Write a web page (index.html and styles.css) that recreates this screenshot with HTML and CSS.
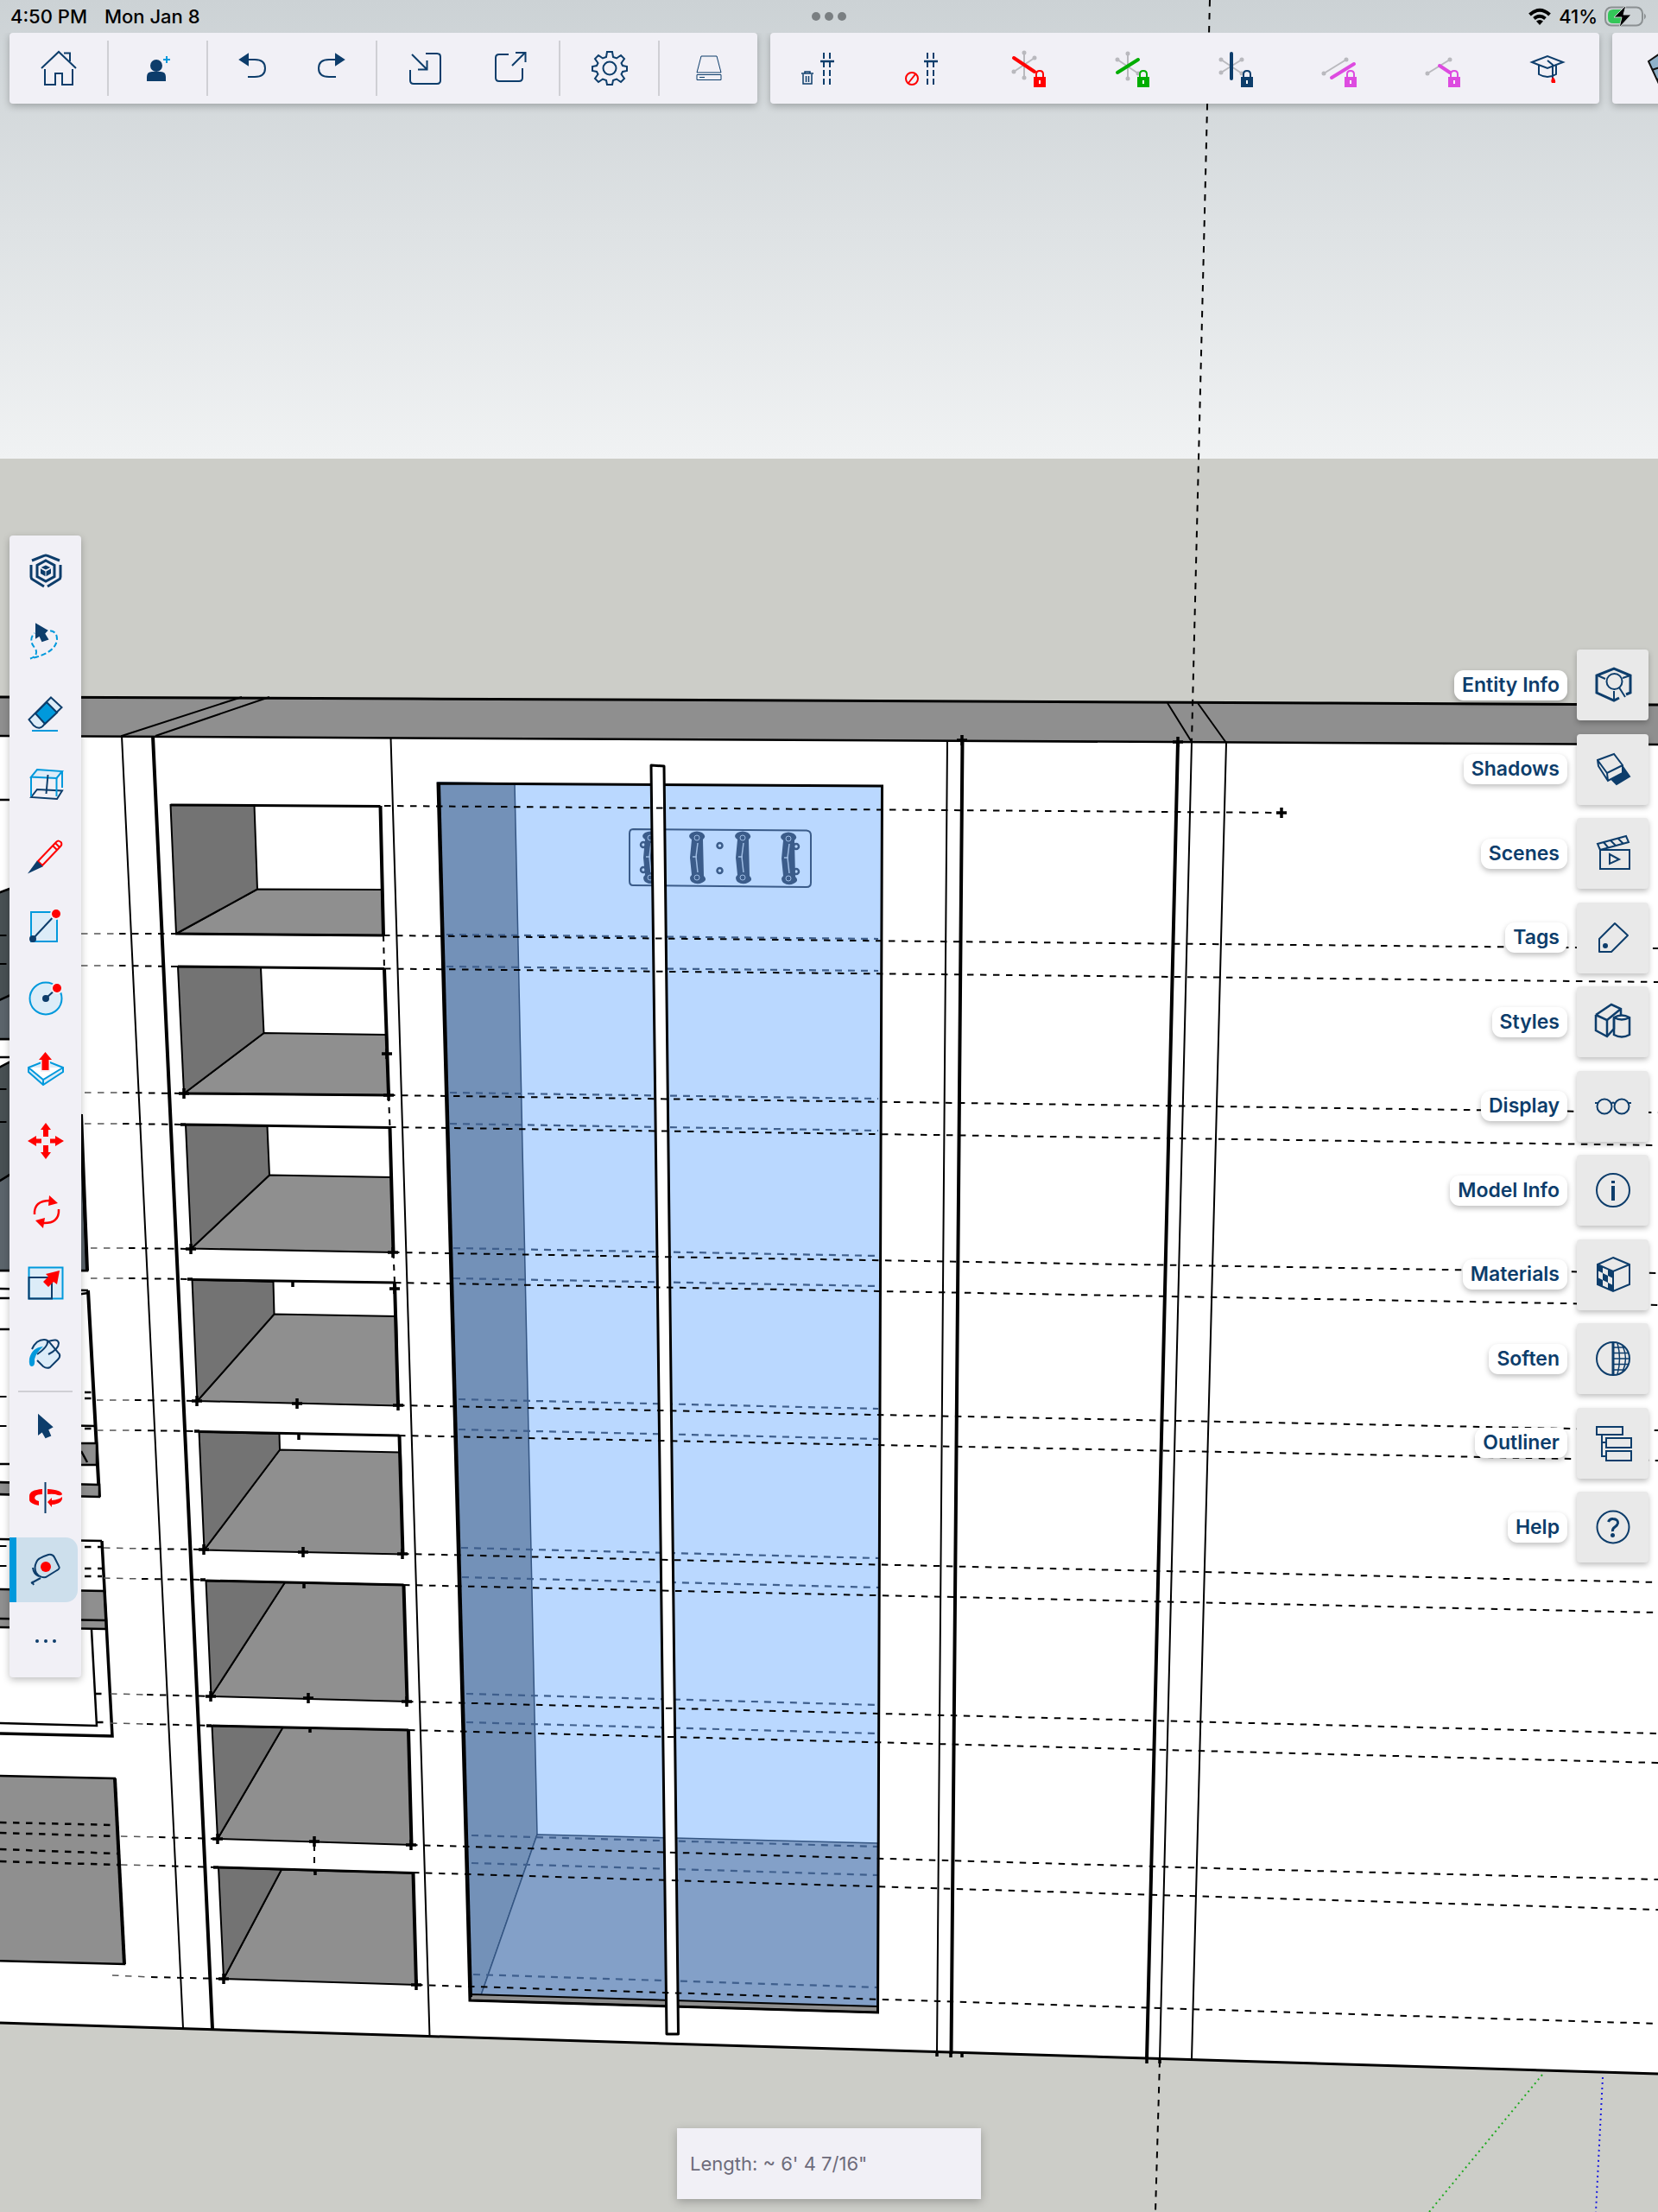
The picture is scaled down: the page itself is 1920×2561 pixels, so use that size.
FILE: index.html
```html
<!DOCTYPE html>
<html lang="en">
<head>
<meta charset="utf-8">
<meta name="viewport" content="width=device-width, initial-scale=1">
<title>Cabinet model</title>
<link rel="stylesheet" href="styles.css">
</head>
<body>
<div class="app">
  <svg class="scene" viewBox="0 0 1920 2561" preserveAspectRatio="xMidYMin slice" role="img" aria-label="3D model of a cabinet wall">
    <defs>
      <linearGradient id="sky" x1="0" y1="0" x2="0" y2="1"><stop offset="0" stop-color="#ccd2d5"/><stop offset="1" stop-color="#f0f2f3"/></linearGradient>
      <path id="plus" d="M-6 0H6M0-6V6" stroke="#000" stroke-width="3.5"/>
      <g id="hook"><path d="M-6-20q-6-4 0-8q6-3 12 0q6 4 1 8l1 42q5 5-2 8q-6 3-12-1q-4-5 0-8l-2-20z" fill="#3b5c8a" stroke="none"/><circle cx="0" cy="-22" r="3" stroke="#9fbde4" stroke-width="1"/><circle cx="0" cy="24" r="3" stroke="#9fbde4" stroke-width="1"/><path d="M1-16L-1 0L1 18M-5 0h5" stroke="#9fbde4" stroke-width="1.5"/></g>
    </defs>
    <rect width="1920" height="2561" fill="#cccdc8"/>
    <rect width="1920" height="531" fill="url(#sky)"/>

    <!-- Carcass -->
    <path d="M0 852L1920 862V2401L0 2342Z" fill="#fff"/>
    <path d="M0 807L1920 816V862L0 852Z" fill="#8f8f8f"/>
    <g fill="none" stroke="#000" stroke-width="3">
      <path d="M0 807L480 809L1540 814L1920 816"/>
      <path d="M0 852L1920 862" stroke-width="2.5"/>
      <path d="M0 2342L480 2357L1100 2376L1920 2401"/>
    </g>
    <g fill="none" stroke="#000" stroke-width="2">
      <path d="M280 807L141 852L212 2348M312 807L180 852M452.500 854L497.500 2357M1097 857L1085 2376M1352 814L1380 859L1343 2384M1387 814L1420 860L1380 2384"/>
      <path d="M177 852L246 2349M1114.500 857L1101.500 2378M1364 859L1328 2384" stroke-width="4"/>
    </g>

    <!-- Drawers and cabinets cut off on the left -->
    <g stroke="#000" stroke-width="2.500">
      <path d="M0 926H11M0 1224H11M0 1492L102 1494M0 1503H60L102 1497M0 1539H20" fill="none"/>
      <path d="M-5 1035L11 1029L60 1003V1203H-5Z" fill="#485053"/>
      <path d="M-5 1160L60 1130V1203H-5Z" fill="#5b646b"/>
      <path d="M-5 1238L60 1204L93 1290L101 1471H-5Z" fill="#485053"/>
      <path d="M-5 1370L93 1310L101 1471H-5Z" fill="#5b646b"/>
      <path d="M94 1290L101 1471M102 1494L115 1733" stroke-width="4" fill="none"/>
      <path d="M60 1671H112V1696H60ZM60 1650L111 1651" fill="#8f8f8f"/>
      <path d="M94 1680L101 1693M0 1695H60" fill="none"/>
      <path d="M-5 1716L115 1719V1733L-5 1730Z" fill="#8f8f8f"/>
      <path d="M-5 1840L121 1842L123 1876L-5 1874ZM-5 1874L123 1876V1886L-5 1884Z" fill="#8f8f8f"/>
      <path d="M0 1995L112 1998L106 1887M0 1782L118 1784" fill="none"/>
      <path d="M118 1784L130 2010L0 2007" fill="none" stroke-width="3.500"/>
      <path d="M-5 2056L133 2059L144 2274L-5 2270Z" fill="#8f8f8f"/>
      <path d="M133 2059L144 2274" stroke-width="4"/>
    </g>

    <!-- Open niches -->
    <g fill="#8f8f8f" stroke="#000" stroke-width="2">
      <path d="M204 1081L298 1029.500L442 1030L444 1083Z"/><path d="M213 1266L305.500 1196L448 1198L450 1268Z"/>
      <path d="M221.500 1445.500L312 1360.500L453 1363L455.500 1450Z"/><path d="M228.500 1622L317.500 1521.500L459 1524L461 1627.500Z"/>
      <path d="M236.500 1794.500L324 1678.500L464 1681.500L466.500 1799.500Z"/><path d="M244.500 1964L330 1832L467.500 1835L471.500 1970Z"/>
      <path d="M252 2129L327.500 2000L473 2003L476.500 2136Z"/><path d="M259 2291L326 2164.500L478.500 2168.500L482 2298Z"/>
    </g>
    <g fill="#737373" stroke="#000" stroke-width="2">
      <path d="M197.500 932L294.500 932L298 1029.500L204 1081Z"/><path d="M206 1119L302 1120L305.500 1196L213 1266Z"/>
      <path d="M215 1302L309.500 1304L312 1360.500L221.500 1445.500Z"/><path d="M222.500 1481.500L316.500 1484L317.500 1521.500L228.500 1622Z"/>
      <path d="M230.500 1657.500L323.500 1660L324 1678.500L236.500 1794.500Z"/><path d="M238.500 1830L330 1832L244.500 1964Z"/>
      <path d="M245.500 1998L327.500 2000L252 2129Z"/><path d="M253 2162L326 2164.500L259 2291Z"/>
    </g>
    <g fill="none" stroke="#000" stroke-width="3">
      <path d="M197.500 932L440.500 933.500M204 1081L444 1083M206 1119L445 1121.500M213 1266L450 1268M215 1302L451.500 1305.500M222.500 1481.500L457 1485M230.500 1657.500L462.500 1662M238.500 1830L467.500 1835M245.500 1998L473 2003M253 2162L478.500 2168.500"/>
      <path stroke-width="4" d="M440.500 933L444 1083M445 1121.500L450 1268M451.500 1305.500L455.500 1450M457 1485L461 1627.500M462.500 1662L466.500 1799.500M467.500 1835L471.500 1970M473 2003L476.500 2136M478.500 2168.500L482 2298"/>
      <path stroke-width="2" stroke-dasharray="7 7" d="M444 1083L445 1121M450 1268L451.500 1305M455.500 1450L457 1485M364 2136V2168"/>
    </g>

    <!-- Tall recess -->
    <path d="M507 906L1021.500 910L1016.500 2330L544 2316Z" fill="#bad8ff"/>
    <g stroke="#355683" stroke-width="1.500">
      <path d="M507 906L596 907L622 2124L557 2310H544Z" fill="#7391b8"/>
      <path d="M622 2124L1016.500 2134V2324L557 2310Z" fill="#83a0c8"/>
    </g>
    <g fill="none" stroke="#3f5f8d" stroke-width="2.200" stroke-dasharray="8 7">
      <path d="M517 1082L1017 1087M517 1119L1017 1124M521 1265L1017 1272M521 1301L1017 1309M525 1445L1017 1454M525 1480L1017 1489M531 1620L1017 1631M531 1655L1017 1666M534 1792L1017 1804M535 1826L1017 1838M540 1961L1017 1974M540 1994L1017 2007M546 2125L1017 2138M546 2157L1017 2171M548 2286L1017 2301"/>
    </g>
    <g fill="none" stroke="#3b5c8a" stroke-width="2">
      <path d="M733 960L934 961.500Q939 962 939 967V1022Q939 1027 934 1027L733 1025Q729 1025 729 1020V965Q729 960 733 960Z"/>
      <use href="#hook" x="753" y="992"/><use href="#hook" x="807" y="992"/><use href="#hook" x="860" y="992"/><use href="#hook" x="913" y="993"/>
      <g stroke-width="2.500"><circle cx="745" cy="978" r="3"/><circle cx="745" cy="1007" r="3"/><circle cx="833.500" cy="979" r="3"/><circle cx="833.500" cy="1008" r="3"/><circle cx="922" cy="980" r="3"/><circle cx="922" cy="1009" r="3"/></g>
    </g>
    <path d="M545 2309L1016.500 2323V2330L544 2316Z" fill="#8f8f8f" stroke="#000" stroke-width="2"/>
    <path d="M507 907L544 2316L1016.500 2330L1021.500 910Z" fill="none" stroke="#000" stroke-width="3"/>
    <path d="M509 907L546 2312" stroke="#000" stroke-width="2"/>
    <path d="M754 886L769 887L785.500 2355H772Z" fill="#fff" stroke="#000" stroke-width="3" stroke-linejoin="round"/>

    <!-- Construction guides -->
    <g fill="none" stroke="#000" stroke-width="2" stroke-dasharray="7.500 7.500">
      <path d="M445 933L1484 941"/>
      <path d="M138 1081L204 1081M444 1083L1080 1090L1920 1098"/><path d="M138 1118L206 1119M445 1121.500L1080 1128L1920 1137"/>
      <path d="M142 1265L213 1266M450 1268L1920 1288"/><path d="M142 1301L215 1302M451 1305L1920 1326"/>
      <path d="M149 1445L221 1446M455 1450L1920 1474"/><path d="M149 1480L222 1481M457 1485L1920 1511"/>
      <path d="M156 1621L228 1622M461 1627L1920 1656"/><path d="M156 1656L230 1657M462 1662L1920 1691"/>
      <path d="M164 1793L236 1794M466 1799L1920 1832"/><path d="M164 1828L238 1829M467 1835L1920 1867"/>
      <path d="M170 1962L244 1964M471 1970L1920 2007"/><path d="M170 1996L245 1998M473 2003L1920 2041"/>
      <path d="M184 2127L252 2129M476 2136L1440 2164L1920 2176"/><path d="M184 2160L253 2162M478 2168L1440 2197L1920 2211"/>
      <path d="M175 2289L259 2291M482 2298L1440 2328L1920 2343"/>
      <path d="M0 2110L133 2113M0 2122L135 2126M0 2141L136 2146M0 2155L137 2159M98 1612H110M98 1619H110M98 1654H110M98 1791H118M98 1816H118M98 1825H118M110 1961H118M112 1994H120" stroke-width="2.500"/>
      <path d="M0 1083H11M0 1116H11M0 1261H11M0 1299H11M0 1617H11M0 1651H11M0 1790H11M0 1813H11"/>
      <path d="M1401 0L1380 859M1343 2386L1338 2561"/>
    </g>
    <!-- Far ends of the guides fade with depth -->
    <path fill="none" stroke="#555" stroke-width="1.500" stroke-dasharray="7.500 7.500" d="M94 1081H138M94 1118H138M98 1265H142M98 1301H142M105 1445H149M105 1480H149M112 1621H156M112 1656H156M120 1792L164 1793M120 1827L164 1828M128 1961L170 1962M128 1995L170 1996M140 2126L184 2127M140 2159L184 2160M130 2287L175 2289"/>
    <path d="M1786 2402L1655 2561" stroke="#1faa1f" stroke-width="2" stroke-dasharray="2 4"/>
    <path d="M1856 2405L1848 2561" stroke="#1c1ce0" stroke-width="2" stroke-dasharray="2 4"/>
    <use href="#plus" x="1484" y="941"/><use href="#plus" x="1114" y="857"/><use href="#plus" x="1364" y="859"/>
    <use href="#plus" x="213" y="1266"/><use href="#plus" x="450" y="1268"/><use href="#plus" x="448" y="1220"/>
    <use href="#plus" x="221" y="1446"/><use href="#plus" x="455" y="1450"/><use href="#plus" x="457" y="1492"/>
    <use href="#plus" x="228" y="1622"/><use href="#plus" x="344" y="1625"/><use href="#plus" x="461" y="1627"/>
    <use href="#plus" x="236" y="1794"/><use href="#plus" x="351" y="1797"/><use href="#plus" x="466" y="1799"/>
    <use href="#plus" x="244" y="1964"/><use href="#plus" x="357" y="1966"/><use href="#plus" x="471" y="1970"/>
    <use href="#plus" x="252" y="2129"/><use href="#plus" x="364" y="2132"/><use href="#plus" x="476" y="2136"/>
    <use href="#plus" x="259" y="2291"/><use href="#plus" x="482" y="2298"/>
    <path d="M339 1483V1490M346 1660V1667M352 1833V1839M359 2001V2006M365 2166V2171M1085 2374V2381M1101 2375V2382M1114 2376V2382M1328 2382V2389M1343 2383V2389M209 1302H215M217 1481H223M225 1657H231M232 1829H238M239 1998H245M247 2162H253" stroke="#000" stroke-width="3.500"/>
  </svg>

  <div class="top">
    <header class="status">
      <div class="status-side"><time>4:50 PM</time><span>Mon Jan 8</span></div>
      <svg class="dots" viewBox="0 0 42 12" fill="#7a7f82"><circle cx="6" cy="6" r="5"/><circle cx="21" cy="6" r="5"/><circle cx="36" cy="6" r="5"/></svg>
      <div class="status-side status-end">
        <svg class="wifi" viewBox="0 0 28 20" fill="none" stroke="#000" stroke-width="4"><path d="M2.500 8Q14-2.500 25.500 8M7.500 12.500Q14 7 20.500 12.500"/><path d="M14 20L10 15.500Q14 12.500 18 15.500Z" fill="#000" stroke="none"/></svg>
        <span>41%</span>
        <svg class="battery" viewBox="0 0 50 24"><rect x="1" y="1.500" width="43" height="21" rx="7" fill="none" stroke="#8b9092" stroke-width="2"/><path d="M10 4H20V20H10Q4 20 4 14V10Q4 4 10 4Z" fill="#34c759"/><path d="M46 8.500Q50 12 46 15.500Z" fill="#8b9092"/><path d="M25-1L11 13H20L17 25L31 10H22Z" fill="#000" stroke="#cfd4d6" stroke-width="1"/></svg>
      </div>
    </header>
    <div class="toolbars">
      <nav class="toolbar" aria-label="File">
        <div class="group"><button class="tool" aria-label="Home"><svg class="icon" viewBox="0 0 48 48"><path d="M4 24L24 5L44 24M30 6.500H37V16M8 25V43H20V30H28V43H40V25"/></svg></button></div>
        <div class="group"><button class="tool" aria-label="Add collaborator"><svg class="icon" viewBox="0 0 48 48"><g class="navy"><circle cx="22" cy="21" r="6"/><path d="M12 38V34Q12 29 17 29H27Q32 29 32 34V38Z"/></g><path class="blue" d="M34 10V18M30 14H38"/></svg></button></div>
        <div class="group pair"><button class="tool" aria-label="Undo"><svg class="icon" viewBox="0 0 48 48"><path d="M14 14H26Q38 14 38 24Q38 34 26 34H18"/><path class="navy" d="M9 14L18 8V20Z"/></svg></button><button class="tool" aria-label="Redo"><svg class="icon" viewBox="0 0 48 48"><path d="M34 14H22Q10 14 10 24Q10 34 22 34H30"/><path class="navy" d="M39 14L30 8V20Z"/></svg></button></div>
        <div class="group pair wide"><button class="tool" aria-label="Import"><svg class="icon" viewBox="0 0 48 48"><path d="M24 7H37Q41 7 41 11V38Q41 42 37 42H10Q6 42 6 38V26M8 8L25 25M15 25.500H25.500V15"/></svg></button><button class="tool" aria-label="Export"><svg class="icon" viewBox="0 0 48 48"><path d="M22 8H11Q7 8 7 12V35Q7 39 11 39H34Q38 39 38 35V24M26 21L41 6M30 6H41.500V17"/></svg></button></div>
        <div class="group"><button class="tool" aria-label="Settings"><svg class="icon" viewBox="0 0 48 48"><path d="M21 5H27L28 11L32 12.500L37 9L41 13L37.500 18L39 21L44 22V27L39 28L37.500 31L41 36L37 40L32 36.500L28 38L27 43H21L20 38L16 36.500L11 40L7 36L10.500 31L9 28L4 27V22L9 21L10.500 18L7 13L11 9L16 12.500L20 11Z"/><circle cx="24" cy="24" r="7.500"/></svg></button></div>
        <div class="group"><button class="tool" aria-label="Storage"><svg class="icon thin" viewBox="0 0 48 48"><path d="M15 10H33L38 29H10ZM10 31.500H38V37.500H10ZM13 34.500H19"/></svg></button></div>
      </nav>
      <nav class="toolbar locks" aria-label="Guides and axis locks">
        <button class="tool" aria-label="Delete guides"><svg class="icon" viewBox="0 0 48 48"><path d="M26 6V44M33 6V44" stroke-dasharray="7 3"/><path d="M22 16H38" stroke-width="2.500"/><path stroke-width="1.500" d="M0 30H14M4 30V28H10V30M2 31V42H12V31M5.500 33V40M8.500 33V40"/></svg></button>
        <button class="tool" aria-label="Disable guides"><svg class="icon" viewBox="0 0 48 48"><path d="M26 6V44M33 6V44" stroke-dasharray="7 3"/><path d="M22 16H38" stroke-width="2.500"/><g class="red"><circle cx="8" cy="36" r="7"/><path d="M12 31L4 41"/></g></svg></button>
        <button class="tool" aria-label="Lock red axis"><svg class="icon" viewBox="0 0 48 48"><path class="grey" d="M18 6V35M6 28L30 12"/><path class="dots-grey" d="M18 6V6M18 35V35M6 28V28M30 12V12"/><path class="axis" stroke="#f00" d="M6 12L30 28"/><g fill="#f00" stroke="#f00"><rect x="30" y="35" width="12" height="10"/><path fill="none" d="M32 35V31Q32 27 36 27Q40 27 40 31V35"/></g><path stroke="#fff" d="M36 38V42"/></svg></button>
        <button class="tool" aria-label="Lock green axis"><svg class="icon" viewBox="0 0 48 48"><path class="grey" d="M18 7V36M6 14L30 30"/><path class="dots-grey" d="M18 7V7M18 36V36M6 14V14M30 30V30"/><path class="axis" stroke="#00ad00" d="M6 29L30 14"/><g fill="#00ad00" stroke="#00ad00"><rect x="30" y="35" width="12" height="10"/><path fill="none" d="M32 35V31Q32 27 36 27Q40 27 40 31V35"/></g><path stroke="#fff" d="M36 38V42"/></svg></button>
        <button class="tool" aria-label="Lock blue axis"><svg class="icon" viewBox="0 0 48 48"><path class="grey" d="M6 14L30 30M6 29L30 14"/><path class="dots-grey" d="M6 14V14M30 30V30M6 29V29M30 14V14"/><path class="axis" d="M18 7V36"/><g fill="#0d3d6b"><rect x="30" y="35" width="12" height="10"/><path fill="none" d="M32 35V31Q32 27 36 27Q40 27 40 31V35"/></g><path stroke="#fff" d="M36 38V42"/></svg></button>
        <button class="tool" aria-label="Lock parallel"><svg class="icon" viewBox="0 0 48 48"><path class="grey" d="M5 30L31 14"/><path class="dots-grey" d="M5 30V30M31 14V14"/><path class="axis" stroke="#dd4be0" d="M14 35L40 19"/><g fill="#dd4be0" stroke="#dd4be0"><rect x="30" y="35" width="12" height="10"/><path fill="none" d="M32 35V31Q32 27 36 27Q40 27 40 31V35"/></g><path stroke="#fff" d="M36 38V42"/></svg></button>
        <button class="tool" aria-label="Lock perpendicular"><svg class="icon" viewBox="0 0 48 48"><path class="grey" d="M5 30L31 14"/><path class="dots-grey" d="M5 30V30M31 14V14"/><path class="axis" stroke="#dd4be0" d="M19 21L31 29"/><g fill="#dd4be0" stroke="#dd4be0"><rect x="30" y="35" width="12" height="10"/><path fill="none" d="M32 35V31Q32 27 36 27Q40 27 40 31V35"/></g><path stroke="#fff" d="M36 38V42"/></svg></button>
        <button class="tool" aria-label="Instructor"><svg class="icon" viewBox="0 0 48 48"><path d="M6 17L24 10L42 17L24 24ZM14 20V31Q24 37 34 31V20M24 15L30 20V36"/><path class="redfill" d="M30.500 34Q27 38 29 41H33Q34 38 30.500 34Z"/></svg></button>
      </nav>
      <nav class="toolbar clipped" aria-label="Views"><button class="tool" aria-label="Standard view"><svg class="icon" viewBox="0 0 48 48"><path d="M4 16L20 5H44V42H16Z" fill="#8fb1c9" stroke="#111"/><path d="M8 26L26 20M13 37L28 33M20 5L32 42" stroke="#111"/></svg></button></nav>
    </div>
  </div>

  <aside class="rail" aria-label="Drawing tools">
    <div class="rail-list">
      <button class="rail-tool" aria-label="SketchUp"><svg class="icon" viewBox="0 0 48 48"><g stroke-width="3"><path d="M7 17V31Q7 33 9 34L22 42M26 42L39 34Q41 33 41 31V17M8 12L22 6.500Q24 5.500 26 6.500L40 12"/><path d="M24 12L34 17.500V30.500L24 36L14 30.500V17.500Z"/></g><path class="navy" d="M21 20L24 18.500L27 20L24 21.500ZM19 23L22.500 25V28.500L19 26.500ZM29 23L25.500 25V28.500L29 26.500Z"/></svg></button>
      <button class="rail-tool" aria-label="Lasso"><svg class="icon" viewBox="0 0 48 48"><path class="blue" stroke-dasharray="6 3" d="M20 12Q37 8 37 21Q36 37 6 43.500Q16 40 12 32Q3 22 11 14"/><path class="navy" d="M13 4V19L17 16.500L20 23L26 21L22 14.500L25 11Z"/></svg></button>
      <button class="rail-tool" aria-label="Eraser"><svg class="icon" viewBox="0 0 48 48"><path fill="#dcecf8" d="M30 5.500L42.500 17L22 37Q17 44 10 38L4.500 31Z"/><path class="bluefill" d="M25 11L37 23L23 36L12 24Z"/><path class="blue" d="M8 44H38"/></svg></button>
      <button class="rail-tool" aria-label="Section plane"><svg class="icon" viewBox="0 0 48 48"><path d="M7 39L14 30L43 31.500L37 41Z"/><path class="blue pale" d="M14 7L43 9L36.500 17L7 15.500Z"/><path class="blue" d="M7 15V38M36.500 17V38M43 9V28"/><path d="M26.500 13L24.500 35"/></svg></button>
      <button class="rail-tool" aria-label="Pencil"><svg class="icon" viewBox="0 0 48 48"><path class="red" d="M15 30L36 8Q39 5 42 8.500Q43 11 41 13L20 35ZM32 12L37 17M35 9L40 14"/><path class="navy" d="M6 42L14 31L19 36Z"/></svg></button>
      <button class="rail-tool" aria-label="Rectangle"><svg class="icon" viewBox="0 0 48 48"><rect class="blue pale" x="7" y="7" width="30" height="34"/><path d="M9 38L36 9"/><circle cx="36" cy="9" r="7" fill="#f1f0f6" stroke="none"/><circle class="redfill" cx="36" cy="9" r="5"/><circle class="navy" cx="9" cy="38" r="3"/></svg></button>
      <button class="rail-tool" aria-label="Circle"><svg class="icon" viewBox="0 0 48 48"><circle class="blue pale" cx="24" cy="24" r="18.500"/><path d="M24 24L37 12"/><circle cx="37" cy="12" r="7" fill="#f1f0f6" stroke="none"/><circle class="redfill" cx="37" cy="12" r="5"/><circle class="navy" cx="24" cy="24" r="3"/></svg></button>
      <button class="rail-tool" aria-label="Push/Pull"><svg class="icon" viewBox="0 0 48 48"><path class="blue pale" d="M4 22L24 14L44 22V27L21 42L4 27Z"/><path class="blue" fill="#fff" d="M4 22L21 36L44 22M21 36V41"/><path d="M23.500 1L33 14H29V27H18V14H14Z" fill="#f1f0f6" stroke="none"/><path class="redfill" d="M23.500 4L31 13H27.500V25H19.500V13H16Z"/></svg></button>
      <button class="rail-tool" aria-label="Move"><svg class="icon" viewBox="0 0 48 48"><path class="redfill" d="M24 3L30 11H27V19H21V11H18ZM24 45L30 37H27V29H21V37H18ZM3 24L13 18V21.500H19V26.500H13V30ZM45 24L35 18V21.500H29V26.500H35V30Z"/></svg></button>
      <button class="rail-tool" aria-label="Rotate"><svg class="icon" viewBox="0 0 48 48"><path class="red" stroke-width="2.500" d="M11 27Q10 11 29 11M39 21Q40 38 20 37"/><path class="redfill" d="M28 5L38 14L27 17ZM21 43L12 34L23 31Z"/></svg></button>
      <button class="rail-tool" aria-label="Scale"><svg class="icon" viewBox="0 0 48 48"><rect class="blue pale" x="4.500" y="5.500" width="39" height="36"/><path d="M4.500 17H31V41.500H4.500Z"/><path class="redfill" d="M40 9L24 13L27 16L21 22L27 28L33 22L37 25Z"/></svg></button>
      <button class="rail-tool" aria-label="Paint bucket"><svg class="icon" viewBox="0 0 48 48"><path fill="#dcecf8" d="M8 18Q13 7 22 7Q26 7 29 11L40 24Q41 27 38 30L29 39Q25 41 21 38L14 31"/><path d="M27 9Q38 5 39 11Q39 18 27 24M26 9Q27 15 14 24"/><path class="bluefill" stroke="none" d="M21 15Q8 16 5 29Q4 38 8 38Q12 37 11 30Q12 23 21 15Z"/></svg></button>
    </div>
    <div class="rail-list extra">
      <button class="rail-tool" aria-label="Select"><svg class="icon" viewBox="0 0 48 48"><path class="navy" d="M16 12V33L20 30L24 37L29 35L26 28L31 25Z"/></svg></button>
      <button class="rail-tool" aria-label="Flip"><svg class="icon" viewBox="0 0 48 48"><path d="M23.500 6V42"/><path class="redfill" d="M20 14Q5 15 5 22V27Q6 31 16 33V28Q9 26 12 22Q14 20 20 20ZM26 14Q42 15 43 20Q42 22 38 21Q34 19 26 20ZM43 23Q44 31 31 32V35L26 29L31 24V27Q40 26 43 23Z"/></svg></button>
      <button class="rail-tool active" aria-label="Tape measure" aria-pressed="true"><svg class="icon" viewBox="0 0 48 48"><path d="M13 16Q14 11 27 7Q32 6 34 10L39 20Q41 23 37 25L24 33Q17 34 13 28Q10 22 13 16ZM9 22Q10 30 16 32M7 40L18 34M8 38L10 42"/><circle class="redfill" cx="24" cy="21" r="6"/></svg></button>
      <button class="rail-tool" aria-label="More tools"><svg class="icon" viewBox="0 0 48 48"><g class="navy"><circle cx="14" cy="24" r="1"/><circle cx="24" cy="24" r="1"/><circle cx="34" cy="24" r="1"/></g></svg></button>
    </div>
  </aside>

  <aside class="panels" aria-label="Panels">
    <button class="panel"><span class="label">Entity Info</span><span class="tile"><svg class="icon" viewBox="0 0 48 48"><path stroke-width="3" d="M31 39L25 42L5 33V13L25 5L44 13V33L39 35"/><circle cx="25.500" cy="20" r="9"/><path d="M6 13L15 17M35 16L44 13M25 31V42M31 27L38 38"/></svg></span></button>
    <button class="panel"><span class="label">Shadows</span><span class="tile"><svg class="icon" viewBox="0 0 48 48"><path d="M6 13L25 6L35 19L35 28L18 37L7 20ZM6 13L17 28L35 19M17 28L18 37"/><path class="navy" d="M23 36L36 28V22L43 32L28 41Z"/></svg></span></button>
    <button class="panel"><span class="label">Scenes</span><span class="tile"><svg class="icon" viewBox="0 0 48 48"><path d="M9 20H43V42H9ZM9 20L6 13L39 4L42 11ZM13 11L18 17M21 9L27 15M30 7L36 13"/><path d="M20 25V36L31 31Z"/></svg></span></button>
    <button class="panel"><span class="label">Tags</span><span class="tile"><svg class="icon" viewBox="0 0 48 48"><path stroke-linejoin="round" d="M8 25L26 7L41 21L22 40H8Z"/><circle class="navy" cx="15" cy="33" r="2"/></svg></span></button>
    <button class="panel"><span class="label">Styles</span><span class="tile"><svg class="icon" viewBox="0 0 48 48"><path stroke-width="2.500" d="M4 16L22 4L33 9V17M4 16V34L17 41L25 32V20M4 16L17 22V41M17 22L33 9"/><path stroke-width="2.500" d="M25 19Q34 14 43 19V39Q34 44 25 39ZM25 19Q34 24 43 19"/></svg></span></button>
    <button class="panel"><span class="label">Display</span><span class="tile"><svg class="icon" viewBox="0 0 48 48"><circle cx="14" cy="24" r="8.500"/><circle cx="34" cy="24" r="8.500"/><path d="M22 21Q24 18 26 21M3 20H6M42 20H45"/></svg></span></button>
    <button class="panel"><span class="label">Model Info</span><span class="tile"><svg class="icon" viewBox="0 0 48 48"><circle cx="24" cy="24" r="19"/><path stroke-width="4" d="M24 19V36M24 13V16"/></svg></span></button>
    <button class="panel"><span class="label">Materials</span><span class="tile"><svg class="icon" viewBox="0 0 48 48"><path d="M24 4L43 12V35L24 43L6 35V12ZM6 12L24 20L43 12M24 20V43"/><path class="navy" stroke="none" d="M6 12L12 15V22L6 19ZM18 18L24 20V28L18 25ZM12 22L18 25V33L12 30ZM6 27L12 30V37L6 35ZM18 33L24 36V43L18 40Z"/></svg></span></button>
    <button class="panel"><span class="label">Soften</span><span class="tile"><svg class="icon" viewBox="0 0 48 48"><circle cx="24" cy="24" r="19"/><path d="M24 5V43" stroke-width="3"/><path stroke-width="1.500" d="M24 11H37M24 17.500H42M24 24H43M24 30.500H42M24 37H37M29 6Q34 24 29 42M35 9Q42 24 35 39"/></svg></span></button>
    <button class="panel"><span class="label">Outliner</span><span class="tile"><svg class="icon" viewBox="0 0 48 48"><path d="M5 5H35V14H5ZM16 18H45V29H16ZM16 33H45V44H16ZM11 14V39H16M11 23H16"/></svg></span></button>
    <button class="panel"><span class="label">Help</span><span class="tile"><svg class="icon" viewBox="0 0 48 48"><circle cx="24" cy="24" r="18.500"/><path stroke-width="3" d="M18.500 18Q20 14 24 14.500Q30 15 29.500 19.500Q29 22 26 24Q23 26 23.500 29"/><circle class="navy" cx="23.500" cy="33.500" r="1.500"/></svg></span></button>
  </aside>

  <output class="measure">Length: ~ 6' 4 7/16"</output>
</div>
</body>
</html>
```
FILE: styles.css
```css
* { box-sizing: border-box; }

body {
  margin: 0;
  font-family: Inter, "Liberation Sans", sans-serif;
  background: #cccdc8;
}

button {
  padding: 0;
  border: 0;
  background: none;
  font: inherit;
  color: inherit;
  cursor: pointer;
}

.app {
  position: relative;
  min-height: 100vh;
  display: grid;
  grid-template: minmax(0, 1fr) / minmax(0, 1fr);
  overflow: hidden;
}

.app > * { grid-area: 1 / 1; }

/* The model fills the window behind the floating toolbars */
.scene {
  position: absolute;
  inset: 0;
  width: 100%;
  height: 100%;
}

.top,
.rail,
.panels,
.measure { position: relative; }

.top { align-self: start; }

.status {
  height: 38px;
  padding: 0 12px;
  display: grid;
  grid-template-columns: 1fr auto 1fr;
  align-items: center;
  font-size: 22px;
  font-weight: 500;
  color: #000;
}

.status-side {
  display: flex;
  align-items: center;
  gap: 20px;
}

.status-end {
  justify-content: flex-end;
  gap: 8px;
}

.dots { width: 42px; height: 12px; }
.wifi { width: 28px; height: 20px; }
.battery { width: 50px; height: 24px; overflow: visible; }

.toolbars {
  display: flex;
  gap: 15px;
  padding: 0 0 12px 11px;
  overflow: hidden;
}

.toolbar {
  flex: none;
  display: flex;
  align-items: center;
  height: 82px;
  background: #f1f0f6;
  border-radius: 4px;
  box-shadow: 0 3px 8px rgba(0, 0, 0, 0.25);
}

.group {
  display: flex;
  height: 64px;
}

.group + .group { border-left: 2px solid #cfcfd4; }

.tool {
  width: 113px;
  display: grid;
  place-items: center;
}

.pair { padding: 0 7px; }
.pair .tool { width: 90px; }
.wide .tool { width: 98px; }
.locks .tool { width: 120px; }

.clipped { padding-left: 38px; }
.clipped .tool { width: 48px; }

.icon {
  width: 48px;
  height: 48px;
  display: block;
  fill: none;
  stroke: #0d3d6b;
  stroke-width: 2;
}

.thin { stroke-width: 1; }
.navy { fill: #0d3d6b; }
.blue { stroke: #0099dc; }
.pale { fill: #dcecf8; }
.bluefill { fill: #0099dc; }
.red { stroke: #f00; }
.redfill { fill: #f00; stroke: none; }
.grey { stroke: #b9b9be; stroke-width: 2; }
.dots-grey { stroke: #b9b9be; stroke-width: 5; stroke-linecap: round; }
.axis { stroke-width: 4; stroke-linecap: round; }

.rail {
  place-self: center start;
  margin-left: 11px;
  width: 83px;
  background: #f1f0f6;
  border-radius: 4px;
  box-shadow: 0 3px 8px rgba(0, 0, 0, 0.25);
}

.rail-list {
  display: grid;
  grid-auto-rows: 1fr;
  min-height: 990px;
}

.extra {
  min-height: 332px;
  position: relative;
}

.extra::before {
  content: "";
  position: absolute;
  top: 0;
  left: 10px;
  right: 10px;
  border-top: 2px solid #cfcfd4;
}

.rail-tool {
  display: grid;
  place-items: center;
}

.active {
  margin: 4px 4px 4px 0;
  padding-right: 4px;
  background: #cddfec;
  border-left: 8px solid #0099dc;
  border-radius: 0 14px 14px 0;
}

.panels {
  place-self: center end;
  margin-right: 11px;
  min-height: 1057px;
  display: flex;
  flex-direction: column;
  justify-content: space-between;
}

.panel {
  display: flex;
  align-items: center;
  justify-content: flex-end;
  gap: 11px;
}

.label {
  padding: 4px 9px;
  border-radius: 11px;
  background: #fff;
  box-shadow: 0 3px 6px rgba(0, 0, 0, 0.25);
  font-size: 23px;
  line-height: 27px;
  font-weight: 600;
  color: #0d3d6b;
}

.tile {
  width: 83px;
  height: 82px;
  display: grid;
  place-items: center;
  background: #e9e9e9;
  border-radius: 4px;
  box-shadow: 0 3px 6px rgba(0, 0, 0, 0.25);
}

.measure {
  place-self: end center;
  margin-bottom: 15px;
  width: 352px;
  padding: 27px 15px;
  background: #f1f0f6;
  box-shadow: 0 3px 10px rgba(0, 0, 0, 0.25);
  font-size: 22px;
  line-height: 28px;
  color: #6d6b7a;
}
```
